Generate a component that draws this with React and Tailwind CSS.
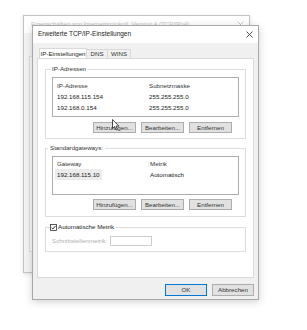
import React from 'react';

const font = { fontFamily: '"Liberation Sans", Arial, sans-serif' };

function Btn({ children, primary = false, className = '' }) {
  return (
    <div
      className={
        'flex items-center justify-center bg-[#e1e1e1] text-[#333] ' +
        (primary ? 'border border-[#0078d7] ' : 'border border-[#adadad] ') +
        className
      }
    >
      {children}
    </div>
  );
}

function ButtonRow() {
  return (
    <div className="flex justify-end gap-[5px] pr-[7px]">
      <Btn className="w-[43px] h-[11px]">Hinzufügen...</Btn>
      <Btn className="w-[43px] h-[11px]">Bearbeiten...</Btn>
      <Btn className="w-[43px] h-[11px]">Entfernen</Btn>
    </div>
  );
}

function Cursor() {
  return (
    <svg className="absolute left-[112px] top-[119px]" width="8" height="12" viewBox="0 0 8 12">
      <path d="M0.5 0.5 L0.5 9.5 L2.6 7.6 L4.1 11 L5.4 10.4 L4 7.1 L7 7.1 Z" fill="#fff" stroke="#222" strokeWidth="0.8" strokeLinejoin="round" />
    </svg>
  );
}

export default function App() {
  return (
    <div className="relative w-[307px] h-[330px] bg-white overflow-hidden text-[6.2px] leading-none text-[#333]" style={font}>
      {/* window behind */}
      <div className="absolute left-[23px] top-[15px] w-[227px] h-[258px] border border-[#c4c4c4] bg-[#f4f4f4] shadow-[0_1px_4px_rgba(0,0,0,0.12)] flex flex-col">
        <div className="h-[17px] bg-white flex items-center justify-between pl-[7px] pr-[5px] text-[#c4c4c4] shrink-0">
          <span>Eigenschaften von Internetprotokoll, Version 4 (TCP/IPv4)</span>
          <svg width="7" height="7" viewBox="0 0 7 7">
            <path d="M0.5 0.5 L6.5 6.5 M6.5 0.5 L0.5 6.5" stroke="#bbb" strokeWidth="0.9" />
          </svg>
        </div>
        <div className="ml-[5px] mt-[23px] w-[215px] h-[196px] border border-[#dedede] bg-[#fbfbfb]" />
      </div>

      {/* dialog */}
      <div className="absolute left-[32px] top-[25px] w-[227px] h-[275px] border border-[#a8a8a8] bg-[#f0f0f0] shadow-[0_2px_8px_rgba(0,0,0,0.18)] flex flex-col">
        <div className="h-[17px] bg-white flex items-center justify-between pl-[5px] pr-[5px] shrink-0">
          <span className="text-[6.5px] text-[#222]">Erweiterte TCP/IP-Einstellungen</span>
          <svg width="7" height="7" viewBox="0 0 7 7">
            <path d="M0.5 0.5 L6.5 6.5 M6.5 0.5 L0.5 6.5" stroke="#444" strokeWidth="0.9" />
          </svg>
        </div>

        <div className="pl-[4px] pt-[5px] flex flex-col">
          {/* tabs */}
          <div className="flex items-end h-[11px] pl-[2px]">
            <div className="h-[11px] w-[48px] bg-white border border-b-0 border-[#d9d9d9] flex items-center justify-center text-[#222]">IP-Einstellungen</div>
            <div className="h-[10px] w-[21px] border-t border-r border-[#d9d9d9] bg-[#f0f0f0] flex items-center justify-center">DNS</div>
            <div className="h-[10px] w-[23px] border-t border-r border-[#d9d9d9] bg-[#f0f0f0] flex items-center justify-center">WINS</div>
          </div>

          {/* panel */}
          <div className="w-[217px] h-[220px] bg-white border border-[#d9d9d9] -mt-px px-[7px] pt-[7px] flex flex-col">
            {/* IP addresses */}
            <fieldset className="border border-[#dcdcdc] px-[6px] pb-[5px] h-[73px]">
              <legend className="px-[2px] ml-[-2px] text-[#333]">IP-Adressen</legend>
              <div className="mt-[5px] h-[40px] border border-[#adadad] bg-white flex flex-col pt-[3px]">
                <div className="flex h-[10px] items-center pl-[4px]">
                  <span className="w-[92px]">IP-Adresse</span>
                  <span>Subnetzmaske</span>
                </div>
                <div className="flex h-[11px] items-center pl-[4px] text-[#222]">
                  <span className="w-[92px]">192.168.115.154</span>
                  <span>255.255.255.0</span>
                </div>
                <div className="flex h-[11px] items-center pl-[4px] text-[#222]">
                  <span className="w-[92px]">192.168.0.154</span>
                  <span>255.255.255.0</span>
                </div>
              </div>
              <div className="mt-[5px]">
                <ButtonRow />
              </div>
            </fieldset>

            {/* gateways */}
            <fieldset className="mt-[6px] border border-[#dcdcdc] px-[6px] pb-[5px] h-[72px]">
              <legend className="px-[2px] ml-[-4px] text-[#333]">Standardgateways:</legend>
              <div className="mt-[5px] h-[39px] border border-[#adadad] bg-white flex flex-col pt-[2px]">
                <div className="flex h-[10px] items-center pl-[4px]">
                  <span className="w-[92px] border-r border-[#eee]">Gateway</span>
                  <span className="pl-[1px]">Metrik</span>
                </div>
                <div className="flex h-[11px] items-center pl-[2px] text-[#222]">
                  <span className="w-[94px]">
                    <span className="bg-[#ececec] px-[2px] py-[2px]">192.168.115.10</span>
                  </span>
                  <span className="pl-[1px]">Automatisch</span>
                </div>
              </div>
              <div className="mt-[4px]">
                <ButtonRow />
              </div>
            </fieldset>

            {/* metric */}
            <fieldset className="mt-[7px] border border-[#dcdcdc] px-[6px] pb-[5px] h-[28px]">
              <legend className="ml-[-2px] pr-[2px] flex items-center gap-[1px] text-[#222]">
                <svg width="7" height="7" viewBox="0 0 7 7">
                  <rect x="0.5" y="0.5" width="6" height="6" fill="#fff" stroke="#333" strokeWidth="0.8" />
                  <path d="M1.5 3.6 L2.9 5 L5.6 1.9" fill="none" stroke="#222" strokeWidth="0.9" />
                </svg>
                <span>Automatische Metrik</span>
              </legend>
              <div className="flex items-center mt-[5px]">
                <span className="w-[58px] text-[#b0b0b0]">Schnittstellenmetrik:</span>
                <div className="w-[42px] h-[10px] border border-[#cfcfcf] bg-white" />
              </div>
            </fieldset>
          </div>
        </div>

        {/* footer */}
        <div className="flex justify-end gap-[5px] pr-[4px] pt-[6px]">
          <Btn primary className="w-[42px] h-[12px]">OK</Btn>
          <Btn className="w-[42px] h-[12px]">Abbrechen</Btn>
        </div>
      </div>

      <Cursor />
    </div>
  );
}
